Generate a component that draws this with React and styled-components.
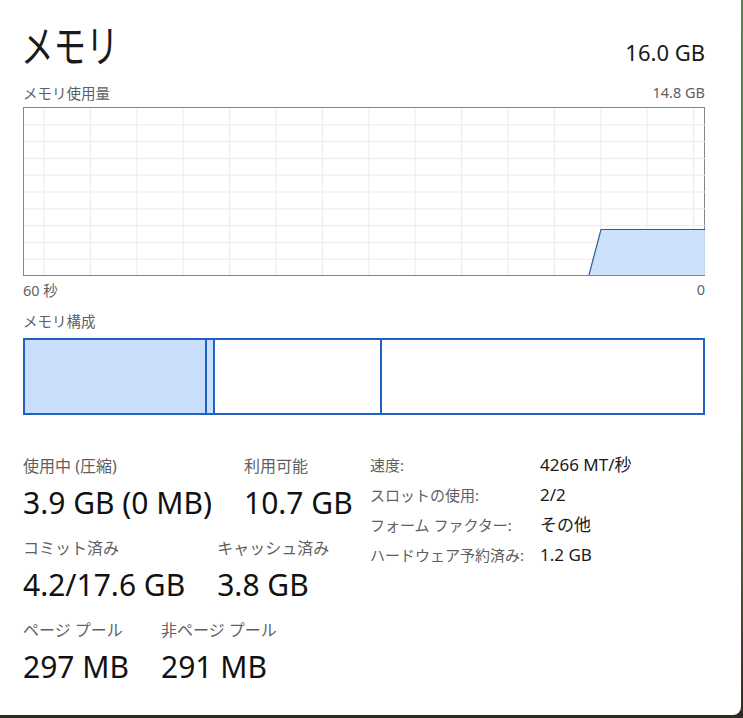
import React from "react";
import styled, { createGlobalStyle } from "styled-components";

const GlobalStyle = createGlobalStyle`
  html, body {
    margin: 0;
    padding: 0;
  }
  body {
    width: 743px;
    height: 718px;
    overflow: hidden;
    background: linear-gradient(180deg, #5f7f52 0%, #55704a 55%, #4a4a36 85%, #2f2a22 100%);
    font-family: "Segoe UI", "Noto Sans", "Noto Sans CJK JP", sans-serif;
  }
`;

const Window = styled.div`
  width: 741px;
  height: 715px;
  box-sizing: border-box;
  background: #ffffff;
  border-bottom-right-radius: 8px;
  padding: 18px 36px 0 23px;
  color: #1a1a1a;
`;

const Header = styled.div`
  display: flex;
  justify-content: space-between;
  align-items: flex-end;
  height: 52px;
`;

const Title = styled.h1`
  margin: 0 0 0 -2px;
  font-family: "Noto Sans CJK JP", sans-serif;
  font-size: 44px;
  font-weight: 400;
  line-height: 52px;
  transform: scaleX(0.74);
  transform-origin: left center;
`;

const Total = styled.div`
  font-size: 22px;
  line-height: 30px;
  margin-bottom: 3px;
`;

const CaptionRow = styled.div`
  display: flex;
  justify-content: space-between;
  align-items: center;
  height: 20px;
  margin-top: ${(p) => p.$top || 0}px;
  font-size: 14.5px;
  color: #5f5f5f;
`;

const Chart = styled.div`
  margin-top: 5px;
  height: 169px;
  box-sizing: border-box;
  border: 1px solid #858585;
  line-height: 0;
`;

const Bar = styled.div`
  display: flex;
  height: 77px;
  box-sizing: border-box;
  margin-top: 8px;
  border: 2px solid #1f62c4;
`;

const Segment = styled.div`
  box-sizing: border-box;
  flex: ${(p) => (p.$w ? `0 0 ${p.$w}px` : "1 1 auto")};
  background: ${(p) => (p.$used ? "#c9defb" : "#ffffff")};
  border-right: ${(p) => (p.$last ? "none" : "2px solid #1f62c4")};
`;

const Stats = styled.div`
  display: flex;
  margin-top: 40px;
`;

const LeftStats = styled.div`
  width: 347px;
  display: flex;
  flex-direction: column;
  gap: 15px;
`;

const StatRow = styled.div`
  display: flex;
  gap: 32px;
`;

const Stat = styled.div`
  display: flex;
  flex-direction: column;
`;

const Label = styled.div`
  font-size: 16px;
  line-height: 22px;
  color: #5f5f5f;
`;

const Value = styled.div`
  font-size: 30px;
  line-height: 38px;
  margin-top: 7px;
  color: #111111;
`;

const Specs = styled.div`
  display: grid;
  grid-template-columns: 170px auto;
  grid-auto-rows: 30px;
  align-content: start;
  margin-top: -1px;
  line-height: 22px;
`;

const SpecLabel = styled.div`
  font-size: 15px;
  color: #5f5f5f;
`;

const SpecValue = styled.div`
  font-size: 17px;
  color: #1a1a1a;
`;

const cols = Array.from({ length: 15 }, (_, i) => 20 + i * 46.4);
const rows = Array.from({ length: 9 }, (_, i) => 16.8 * (i + 1));

const UsageGraph = () => (
  <svg width="681" height="167" viewBox="0 0 681 167">
    {rows.map((y) => (
      <line key={"h" + y} x1="0" x2="681" y1={y} y2={y} stroke="#ebebeb" strokeWidth="1" />
    ))}
    {cols.map((x) => (
      <line key={"v" + x} x1={x} x2={x} y1="0" y2="167" stroke="#ebebeb" strokeWidth="1" />
    ))}
    <polygon points="565,167 577,121.5 681,121.5 681,167" fill="#c9defb" fillOpacity="0.9" />
    <polyline points="565,167 577,121.5 681,121.5" fill="none" stroke="#2b5d9c" strokeWidth="1.2" />
  </svg>
);

const segments = [
  { w: 182, used: true },
  { w: 8, used: true },
  { w: 167 },
  { last: true },
];

const specs = [
  ["速度:", "4266 MT/秒"],
  ["スロットの使用:", "2/2"],
  ["フォーム ファクター:", "その他"],
  ["ハードウェア予約済み:", "1.2 GB"],
];

const statRows = [
  [
    ["使用中 (圧縮)", "3.9 GB (0 MB)"],
    ["利用可能", "10.7 GB"],
  ],
  [
    ["コミット済み", "4.2/17.6 GB"],
    ["キャッシュ済み", "3.8 GB"],
  ],
  [
    ["ページ プール", "297 MB"],
    ["非ページ プール", "291 MB"],
  ],
];

export default function App() {
  return (
    <>
      <GlobalStyle />
      <Window>
        <Header>
          <Title>メモリ</Title>
          <Total>16.0 GB</Total>
        </Header>

        <CaptionRow $top={12}>
          <span>メモリ使用量</span>
          <span>14.8 GB</span>
        </CaptionRow>
        <Chart>
          <UsageGraph />
        </Chart>
        <CaptionRow $top={3}>
          <span>60 秒</span>
          <span>0</span>
        </CaptionRow>

        <CaptionRow $top={11}>
          <span>メモリ構成</span>
        </CaptionRow>
        <Bar>
          {segments.map((s, i) => (
            <Segment key={i} $w={s.w} $used={s.used} $last={s.last} />
          ))}
        </Bar>

        <Stats>
          <LeftStats>
            {statRows.map((row, i) => (
              <StatRow key={i}>
                {row.map(([label, value]) => (
                  <Stat key={label}>
                    <Label>{label}</Label>
                    <Value>{value}</Value>
                  </Stat>
                ))}
              </StatRow>
            ))}
          </LeftStats>
          <Specs>
            {specs.map(([label, value]) => (
              <React.Fragment key={label}>
                <SpecLabel>{label}</SpecLabel>
                <SpecValue>{value}</SpecValue>
              </React.Fragment>
            ))}
          </Specs>
        </Stats>
      </Window>
    </>
  );
}
